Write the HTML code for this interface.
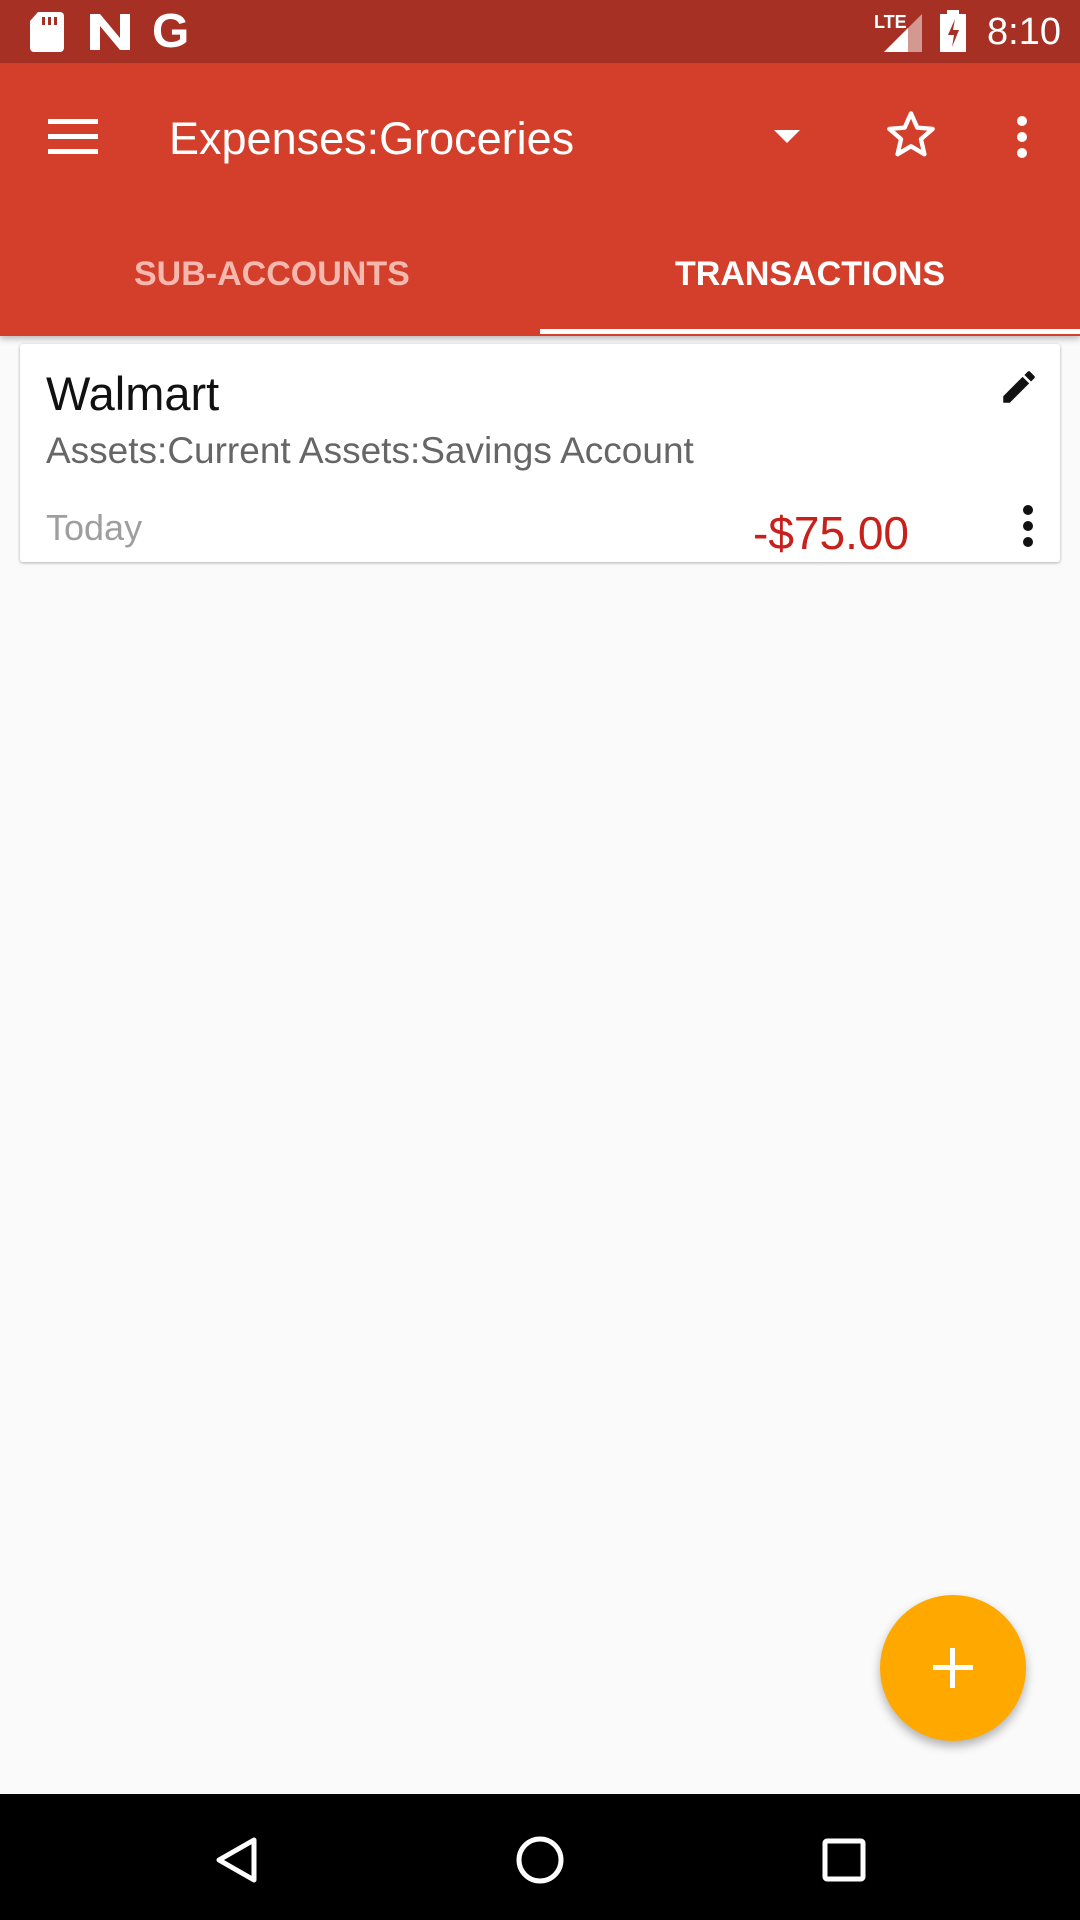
<!DOCTYPE html>
<html><head><meta charset="utf-8"><style>
*{margin:0;padding:0;box-sizing:border-box}
body{width:1080px;height:1920px;background:#fafafa;font-family:"Liberation Sans",Roboto,sans-serif;position:relative;overflow:hidden}
.abs{position:absolute}
#status{left:0;top:0;width:1080px;height:63px;background:#a63023}
#bar{left:0;top:63px;width:1080px;height:273px;background:#d33f2b;box-shadow:0 3px 6px rgba(0,0,0,.25)}
.tab{top:254px;font-size:34px;font-weight:bold}
#card{left:20px;top:344px;width:1040px;height:218px;background:#fff;border-radius:3px;box-shadow:0 1px 3px rgba(0,0,0,.3)}
#nav{left:0;top:1794px;width:1080px;height:126px;background:#000}
#fab{left:880px;top:1595px;width:146px;height:146px;border-radius:50%;background:#ffa900;box-shadow:0 5px 10px rgba(0,0,0,.3)}
</style></head><body>
<div id="status" class="abs">
 <svg class="abs" style="left:30px;top:12px" width="34" height="40" viewBox="0 0 34 40"><path d="M8 0h22a4 4 0 0 1 4 4v32a4 4 0 0 1-4 4H4a4 4 0 0 1-4-4V9z" fill="#fff"/><rect x="12" y="5" width="3" height="8" fill="#a63023"/><rect x="18" y="5" width="3" height="8" fill="#a63023"/><rect x="24" y="5" width="3" height="8" fill="#a63023"/></svg>
 <svg class="abs" style="left:90px;top:14px" width="40" height="36" viewBox="0 0 40 36"><path d="M0 0h10l20 24V0h10v36H30L10 12v24H0z" fill="#fff"/><path d="M30 0h10v36z" fill="#fff" opacity=".6"/></svg>
 <div class="abs" style="left:152px;top:4px;color:#fff;font-size:48px;font-weight:bold">G</div>
 <div class="abs" style="left:874px;top:12px;color:#fff;font-size:18px;font-weight:bold">LTE</div>
 <svg class="abs" style="left:884px;top:14px" width="38" height="38"><path d="M38 0V38H0z" fill="#fff" opacity=".5"/><path d="M24 14V38H0z" fill="#fff"/></svg>
 <svg class="abs" style="left:940px;top:10px" width="26" height="42"><rect x="7" y="0" width="12" height="5" fill="#fff"/><rect x="0" y="4" width="26" height="38" fill="#fff"/><path d="M15 9l-7 16h6l-2 12 7-17h-6z" fill="#a63023"/></svg>
 <div class="abs" style="left:987px;top:11px;color:#fff;font-size:38px">8:10</div>
</div>
<div id="bar" class="abs">
 <svg class="abs" style="left:48px;top:56px" width="50" height="36"><rect y="0" width="50" height="5" fill="#fff"/><rect y="15" width="50" height="5" fill="#fff"/><rect y="30" width="50" height="5" fill="#fff"/></svg>
 <div class="abs" style="left:169px;top:50px;color:#fff;font-size:45px">Expenses:Groceries</div>
 <svg class="abs" style="left:774px;top:67px" width="26" height="14"><path d="M0 0h26L13 13z" fill="#fff"/></svg>
 <svg class="abs" style="left:884px;top:46px" width="54" height="52" viewBox="0 0 24 24"><path d="M12 2l2.9 6.6 7.1.6-5.4 4.7 1.6 7-6.2-3.7-6.2 3.7 1.6-7L2 9.2l7.1-.6z" fill="none" stroke="#fff" stroke-width="2" stroke-linejoin="round"/></svg>
 <svg class="abs" style="left:1012px;top:52px" width="20" height="44"><circle cx="10" cy="6" r="5" fill="#fff"/><circle cx="10" cy="22" r="5" fill="#fff"/><circle cx="10" cy="38" r="5" fill="#fff"/></svg>
 <div class="abs tab" style="left:134px;top:192px;color:#f4b8ae">SUB-ACCOUNTS</div>
 <div class="abs tab" style="left:675px;top:192px;color:#fff">TRANSACTIONS</div>
 <div class="abs" style="left:540px;top:266px;width:540px;height:5px;background:#fff"></div>
</div>
<div id="card" class="abs">
 <div class="abs" style="left:26px;top:22px;font-size:47px;color:#111">Walmart</div>
 <div class="abs" style="left:26px;top:86px;font-size:37px;color:#666">Assets:Current Assets:Savings Account</div>
 <div class="abs" style="left:26px;top:163px;font-size:36px;color:#9e9e9e">Today</div>
 <div class="abs" style="left:733px;top:162px;font-size:46px;color:#c8201b">-$75.00</div>
 <svg class="abs" style="left:978px;top:22px" width="42" height="42" viewBox="0 0 24 24"><path d="M3 17.25V21h3.75L17.8 9.94l-3.75-3.75zM20.7 7.04a1 1 0 0 0 0-1.41l-2.34-2.34a1 1 0 0 0-1.41 0l-1.83 1.83 3.75 3.75z" fill="#111"/></svg>
 <svg class="abs" style="left:1000px;top:160px" width="16" height="44"><circle cx="8" cy="6" r="5" fill="#111"/><circle cx="8" cy="22" r="5" fill="#111"/><circle cx="8" cy="38" r="5" fill="#111"/></svg>
</div>
<div id="fab" class="abs"><svg class="abs" style="left:53px;top:53px" width="40" height="40"><rect x="17" y="0" width="5" height="40" fill="#fff"/><rect x="0" y="17" width="40" height="5" fill="#fff"/></svg></div>
<div id="nav" class="abs">
 <svg class="abs" style="left:214px;top:42px" width="44" height="48"><path d="M40 4V44L5 24z" fill="none" stroke="#fff" stroke-width="5" stroke-linejoin="round"/></svg>
 <svg class="abs" style="left:514px;top:40px" width="52" height="52"><circle cx="26" cy="26" r="21" fill="none" stroke="#fff" stroke-width="5"/></svg>
 <svg class="abs" style="left:822px;top:44px" width="44" height="44"><rect x="3" y="3" width="38" height="38" rx="2" fill="none" stroke="#fff" stroke-width="5"/></svg>
</div>
</body></html>
